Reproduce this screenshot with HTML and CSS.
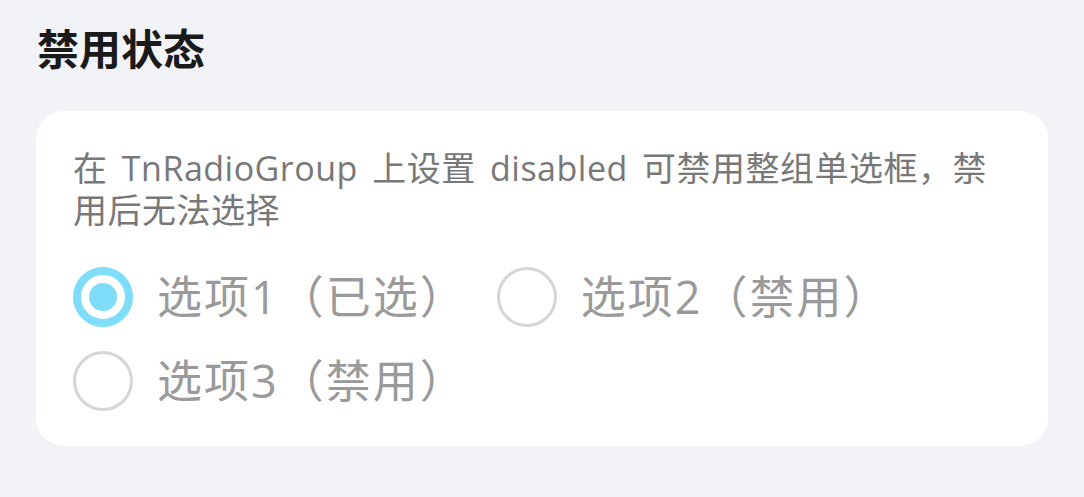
FILE: index.html
```html
<!DOCTYPE html>
<html lang="zh">
<head>
<meta charset="utf-8">
<link rel="stylesheet" href="styles.css">
</head>
<body>
<div class="page">
  <h2 class="title">禁用状态</h2>
  <div class="card">
    <p class="desc">在 TnRadioGroup 上设置 disabled 可禁用整组单选框，禁用后无法选择</p>
    <div class="group">
      <div class="radio">
        <span class="circle checked"><span class="dot"></span></span>
        <span class="label">选项1（已选）</span>
      </div>
      <div class="radio">
        <span class="circle"></span>
        <span class="label">选项2（禁用）</span>
      </div>
      <div class="radio">
        <span class="circle"></span>
        <span class="label">选项3（禁用）</span>
      </div>
    </div>
  </div>
</div>
</body>
</html>
```

FILE: styles.css
```css
html, body {
  margin: 0;
  padding: 0;
  background: #f2f3f7;
  font-family: "Open Sans", "Noto Sans CJK SC", sans-serif;
}
.page {
  padding: 23px 36px 0 36px;
}
.title {
  margin: 0 0 0 1px;
  font-family: "Noto Sans CJK SC", sans-serif;
  font-size: 42px;
  line-height: 48px;
  font-weight: 700;
  color: #1a1a1a;
}
.card {
  margin-top: 40px;
  width: 1012px;
  box-sizing: border-box;
  background: #ffffff;
  border-radius: 28px;
  padding: 36px 37px 35px 37px;
}
.desc {
  margin: 0;
  font-size: 34px;
  line-height: 42px;
  letter-spacing: 0.5px;
  word-spacing: 5px;
  color: #787878;
}
.group {
  margin-top: 36px;
  display: flex;
  flex-wrap: wrap;
  row-gap: 24px;
  column-gap: 30px;
}
.radio {
  display: flex;
  align-items: center;
  gap: 24px;
  height: 60px;
}
.circle {
  width: 60px;
  height: 60px;
  box-sizing: border-box;
  border-radius: 50%;
  border: 3px solid #d6d6d6;
  display: flex;
  align-items: center;
  justify-content: center;
  background: #fff;
}
.circle.checked {
  border: 8px solid #7fddf9;
}
.dot {
  width: 28px;
  height: 28px;
  border-radius: 50%;
  background: #7fddf9;
}
.label {
  font-size: 45px;
  line-height: 60px;
  letter-spacing: 2px;
  color: #9a9a9a;
}
```
